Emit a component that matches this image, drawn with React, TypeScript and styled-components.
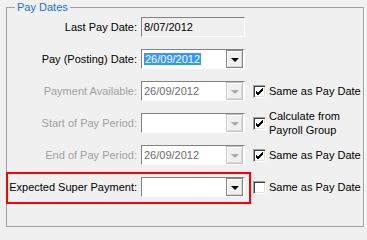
import React from "react";
import styled, { createGlobalStyle } from "styled-components";

const GlobalStyle = createGlobalStyle`
  html, body {
    margin: 0;
    padding: 0;
    background: #f0f0f0;
  }
  body {
    font-family: "Liberation Sans", Arial, sans-serif;
    font-size: 11px;
    color: #000000;
  }
`;

type Row = {
  label: string;
  value: string;
  disabled?: boolean;
  readOnly?: boolean;
  selected?: boolean;
  check?: { checked: boolean; text: string[] };
};

const rows: Row[] = [
  { label: "Last Pay Date:", value: "8/07/2012", readOnly: true },
  { label: "Pay (Posting) Date:", value: "26/09/2012", selected: true },
  {
    label: "Payment Available:",
    value: "26/09/2012",
    disabled: true,
    check: { checked: true, text: ["Same as Pay Date"] },
  },
  {
    label: "Start of Pay Period:",
    value: "",
    disabled: true,
    check: { checked: true, text: ["Calculate from", "Payroll Group"] },
  },
  {
    label: "End of Pay Period:",
    value: "26/09/2012",
    disabled: true,
    check: { checked: true, text: ["Same as Pay Date"] },
  },
  {
    label: "Expected Super Payment:",
    value: "",
    check: { checked: false, text: ["Same as Pay Date"] },
  },
];

export default function App() {
  return (
    <>
      <GlobalStyle />
      <Group>
        <Legend>Pay Dates</Legend>
        <Grid>
          {rows.map((row) => (
            <React.Fragment key={row.label}>
              <Label disabled={row.disabled}>{row.label}</Label>
              <Field readOnly={row.readOnly} disabled={row.disabled}>
                <FieldText disabled={row.disabled}>
                  {row.selected ? <Selected>{row.value}</Selected> : row.value}
                </FieldText>
                {!row.readOnly && (
                  <DropButton disabled={row.disabled}>
                    <Arrow disabled={row.disabled} />
                  </DropButton>
                )}
              </Field>
              {row.check ? (
                <CheckCell>
                  <CheckBox>
                    {row.check.checked && (
                      <svg width="9" height="9" viewBox="0 0 9 9">
                        <path
                          d="M1 4 L3 6 L8 1 M1 5 L3 7 L8 2 M1 6 L3 8 L8 3"
                          stroke="#000"
                          strokeWidth="1"
                          fill="none"
                        />
                      </svg>
                    )}
                  </CheckBox>
                  <CheckText>
                    {row.check.text.map((t) => (
                      <div key={t}>{t}</div>
                    ))}
                  </CheckText>
                </CheckCell>
              ) : (
                <div />
              )}
            </React.Fragment>
          ))}
        </Grid>
        <Highlight />
      </Group>
    </>
  );
}

const Group = styled.div`
  position: relative;
  box-sizing: border-box;
  width: 358px;
  height: 220px;
  margin: 7px 0 0 6px;
  border: 1px solid #a0a0a0;
  box-shadow: 1px 1px 0 #ffffff;
`;

const Legend = styled.div`
  width: fit-content;
  margin: -7px 0 0 8px;
  padding: 0 2px;
  height: 13px;
  line-height: 13px;
  color: #1a6fdc;
  background: #f0f0f0;
`;

const Grid = styled.div`
  display: grid;
  grid-template-columns: 130px 104px auto;
  grid-template-rows: repeat(6, 20px);
  column-gap: 4px;
  row-gap: 12px;
  margin-top: 3px;
`;

const Label = styled.div<{ disabled?: boolean }>`
  justify-self: end;
  align-self: center;
  white-space: nowrap;
  color: ${(p) => (p.disabled ? "#a0a0a0" : "#000000")};
`;

const Field = styled.div<{ readOnly?: boolean; disabled?: boolean }>`
  box-sizing: border-box;
  display: flex;
  align-items: center;
  height: 20px;
  border-top: 1px solid #828282;
  border-left: 1px solid #828282;
  border-right: 1px solid #ffffff;
  border-bottom: 1px solid #ffffff;
  background: ${(p) => (p.readOnly ? "#f0f0f0" : "#ffffff")};
  padding: 0 1px 0 1px;
`;

const FieldText = styled.div<{ disabled?: boolean }>`
  flex: 1;
  padding-left: 1px;
  white-space: nowrap;
  color: ${(p) => (p.disabled ? "#6d6d6d" : "#000000")};
`;

const Selected = styled.span`
  background: #3399ff;
  color: #ffffff;
  padding: 0 1px;
`;

const DropButton = styled.div<{ disabled?: boolean }>`
  box-sizing: border-box;
  width: 17px;
  height: 18px;
  display: flex;
  align-items: center;
  justify-content: center;
  background: #f0f0f0;
  border: 1px solid ${(p) => (p.disabled ? "#c4c4c4" : "#858585")};
  box-shadow: inset 1px 1px 0 #ffffff, inset -1px -1px 0 #d8d8d8;
`;

const Arrow = styled.div<{ disabled?: boolean }>`
  width: 0;
  height: 0;
  margin-top: 1px;
  border-left: 4px solid transparent;
  border-right: 4px solid transparent;
  border-top: 4px solid ${(p) => (p.disabled ? "#a8a8a8" : "#000000")};
`;

const CheckCell = styled.div`
  display: flex;
  align-items: center;
  height: 20px;
  padding-left: 4px;
  white-space: nowrap;
`;

const CheckBox = styled.div`
  box-sizing: border-box;
  flex: none;
  width: 13px;
  height: 13px;
  display: flex;
  align-items: center;
  justify-content: center;
  background: #ffffff;
  border-top: 1px solid #a0a0a0;
  border-left: 1px solid #a0a0a0;
  border-right: 1px solid #ffffff;
  border-bottom: 1px solid #ffffff;
  box-shadow: inset 1px 1px 0 #404040, inset -1px -1px 0 #e3e3e3;
`;

const CheckText = styled.div`
  margin-left: 3px;
  line-height: 14px;
`;

const Highlight = styled.div`
  position: absolute;
  left: -1px;
  top: 164px;
  box-sizing: border-box;
  width: 245px;
  height: 32px;
  border: 2px solid #ff0000;
  pointer-events: none;
`;
